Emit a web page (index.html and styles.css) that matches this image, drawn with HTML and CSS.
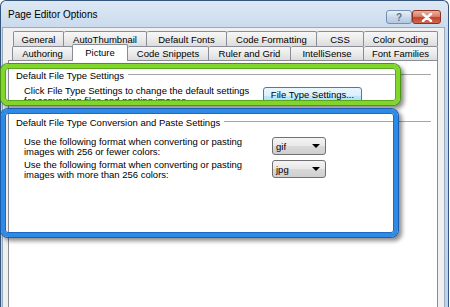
FILE: index.html
```html
<html>
    <head>
        <meta name="viewport" content="width=device-width, initial-scale=1.0">
        <title>Page Editor Options</title>
        <link rel="stylesheet" href="styles.css">
    </head>
    <body>
        <div class="window">
            <div class="titlebar">
                <span class="title">Page Editor Options</span>
                <div class="caption">
                    <span class="cbtn help">?</span>
                    <span class="cbtn close">
                        <svg width="12" height="9" viewBox="0 0 12 9"><path d="M2 1 L10 8 M10 1 L2 8" stroke="#fff" stroke-width="2.4" stroke-linecap="round"/></svg>
                    </span>
                </div>
            </div>
            <div class="client">
                <div class="tabs">
                    <div class="tabrow row1">
                        <div class="tab">General</div>
                        <div class="tab">AutoThumbnail</div>
                        <div class="tab">Default Fonts</div>
                        <div class="tab">Code Formatting</div>
                        <div class="tab">CSS</div>
                        <div class="tab">Color Coding</div>
                    </div>
                    <div class="tabrow row2">
                        <div class="tab">Authoring</div>
                        <div class="tab active">Picture</div>
                        <div class="tab">Code Snippets</div>
                        <div class="tab">Ruler and Grid</div>
                        <div class="tab">IntelliSense</div>
                        <div class="tab">Font Families</div>
                    </div>
                </div>
                <div class="panel">
                    <div class="section first">
                        <div class="legend"><span>Default File Type Settings</span></div>
                        <div class="row">
                            <p>Click File Type Settings to change the default settings<br>for converting files and pasting images.</p>
                            <button class="btn">File Type Settings...</button>
                        </div>
                    </div>
                    <div class="section">
                        <div class="legend"><span>Default File Type Conversion and Paste Settings</span></div>
                        <div class="row">
                            <p>Use the following format when converting or pasting<br>images with 256 or fewer colors:</p>
                            <div class="select"><span>gif</span><i class="arrow"></i></div>
                        </div>
                        <div class="row">
                            <p>Use the following format when converting or pasting<br>images with more than 256 colors:</p>
                            <div class="select"><span>jpg</span><i class="arrow"></i></div>
                        </div>
                    </div>
                </div>
            </div>
        </div>
        <div class="callout green"></div>
        <div class="callout blue"></div>
    </body>
</html>
```

FILE: styles.css
```css
*{
    margin: 0;
    padding: 0;
    box-sizing: border-box;
}
body{
    position: relative;
    width: 450px;
    height: 307px;
    overflow: hidden;
    background-color: #fff;
    font-family: "Liberation Sans", Arial, sans-serif;
    font-size: 9.5px;
    color: #000;
}
.window{
    width: 449px;
    height: 307px;
    border: 1px solid #34567c;
    border-bottom: 0;
    border-radius: 6px 6px 0 0;
    background: linear-gradient(#dde8f4, #c8d9ec 30px, #bcd3ea);
    padding: 0 3px 0 1px;
    overflow: hidden;
}
.titlebar{
    height: 26px;
    display: flex;
    align-items: center;
    justify-content: space-between;
    padding: 0 4px 0 6px;
}
.title{
    font-size: 10px;
    margin-top: 1px;
}
.caption{
    display: flex;
    margin-top: 6px;
}
.cbtn{
    height: 14px;
    display: flex;
    align-items: center;
    justify-content: center;
    border-radius: 3px;
}
.help{
    width: 26px;
    border: 1px solid #7590b3;
    background: linear-gradient(#e9f0f8, #cbd9ea 50%, #b3c8e1);
    color: #5a7596;
    font-weight: bold;
    font-size: 10px;
}
.close{
    width: 29px;
    border: 1px solid #8b3221;
    background: linear-gradient(#eab0a2, #d8806b 45%, #c2412a 55%, #d06a4f);
}
.client{
    height: 300px;
    background-color: #f0f0f0;
    border: 1px solid #9aabbf;
    padding: 3px 6px 0 5px;
}
.tabrow{
    display: grid;
    height: 15px;
}
.row1{
    grid-template-columns: 51px 83px 80px 90px 47px 74px;
    margin-left: 5px;
}
.row2{
    grid-template-columns: 61px 55px 81px 82px 73px 74px;
    margin-left: 4px;
    height: 14px;
}
.tab{
    display: flex;
    align-items: center;
    justify-content: center;
    border: 1px solid #8a8d95;
    border-left: 0;
    border-bottom: 0;
    border-radius: 2px 2px 0 0;
    background: linear-gradient(#f7f7f7, #ebebeb 50%, #dcdcdc);
}
.tab:first-child{
    border-left: 1px solid #8a8d95;
}
.tab.active{
    background: #fff;
    border-left: 1px solid #8a8d95;
    margin: -2px 0 -1px -1px;
    position: relative;
    z-index: 1;
    align-items: flex-start;
    padding-top: 2px;
}
.panel{
    height: 260px;
    background-color: #fff;
    border: 1px solid #8a8d95;
    padding: 9px 6px 0 0;
}
.legend{
    display: flex;
    align-items: flex-start;
    padding-left: 7px;
    line-height: 12px;
}
.legend::after{
    content: "";
    flex: 1;
    height: 1px;
    margin: 4px 0 0 4px;
    background-color: #a5a5a5;
}
.row{
    display: flex;
    align-items: flex-start;
    padding-left: 15px;
}
.row p{
    line-height: 11px;
    white-space: nowrap;
}
.first .row{
    margin-top: 3px;
}
.first .row p{
    width: 239px;
    line-height: 10px;
    padding-top: 1px;
}
.first{
    height: 47px;
}
.btn{
    width: 99px;
    height: 18px;
    margin-top: 2px;
    border: 1px solid #3c7fb1;
    border-radius: 3px;
    background: linear-gradient(#eaf6fd, #d9f0fc 50%, #bee6fd 50%, #a7d9f5);
    font-family: "Liberation Sans", Arial, sans-serif;
    font-size: 9.5px;
    line-height: 14px;
    padding-bottom: 2px;
    color: #000;
}
.section + .section .legend{
    margin-bottom: 8px;
}
.section + .section .row{
    height: 23px;
}
.section + .section .row p{
    width: 248px;
    line-height: 10px;
}
.select{
    width: 54px;
    height: 18px;
    display: flex;
    align-items: center;
    justify-content: space-between;
    padding: 0 5px 0 3px;
    border: 1px solid #707070;
    border-radius: 3px;
    background: linear-gradient(#f4f4f4, #e8e8e8 50%, #d9d9d9 50%, #cfcfcf);
}
.arrow{
    width: 0;
    height: 0;
    border-left: 4px solid transparent;
    border-right: 4px solid transparent;
    border-top: 4px solid #000;
}
.callout{
    position: absolute;
    border-radius: 7px;
    border-style: solid;
    border-width: 4px;
}
.green{
    left: 1px;
    top: 64px;
    width: 399px;
    height: 41px;
    border-color: #80d62a;
    box-shadow: 0 0 0 1px #4d9415, inset 0 0 0 1px #5aa51c, 3px 3px 4px 1px rgba(0, 0, 0, 0.45);
}
.blue{
    left: 1px;
    top: 109px;
    width: 397px;
    height: 128px;
    border-color: #2d8be6;
    box-shadow: 0 0 0 1px #1a5cb0, inset 0 0 0 1px #1d68c4, 3px 3px 4px 1px rgba(0, 0, 0, 0.45);
}
```
